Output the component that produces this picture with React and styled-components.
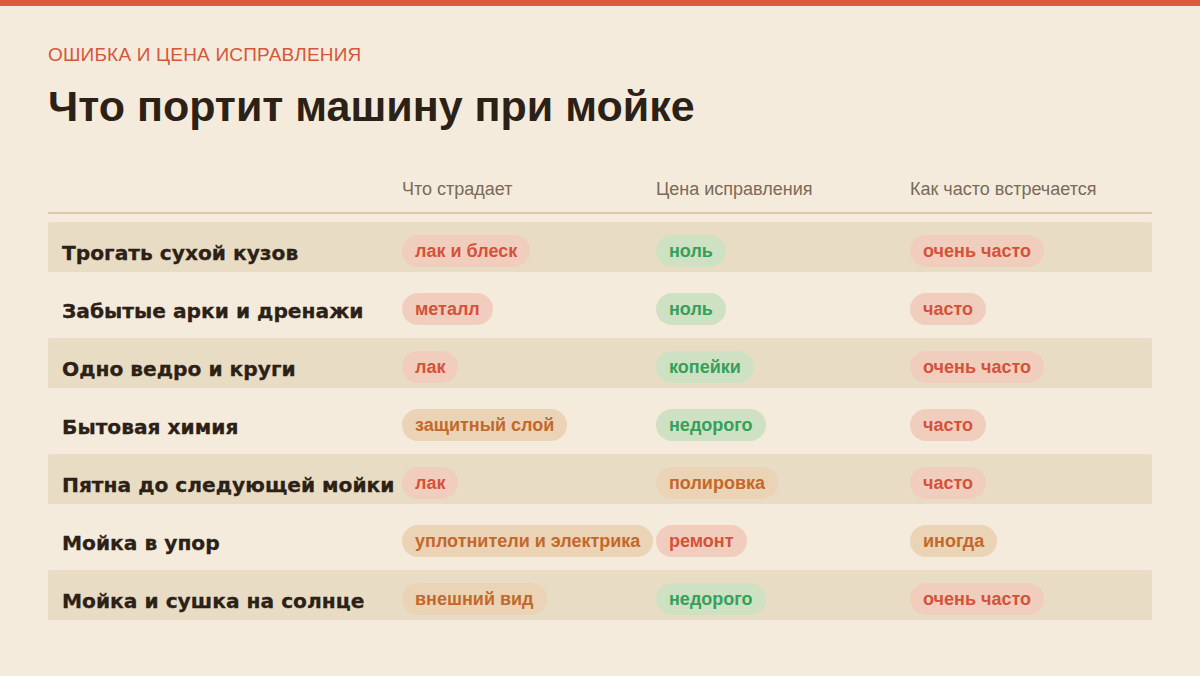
import React from 'react';
import styled, { createGlobalStyle } from 'styled-components';

const GlobalStyle = createGlobalStyle`
	html, body {
		margin: 0;
		padding: 0;
		background: #f5ebdc;
	}
	body {
		font-family: 'Liberation Sans', Arial, sans-serif;
		color: #2b2116;
	}
`;

const Page = styled.div`
	width: 1200px;
	height: 676px;
	box-sizing: border-box;
	border-top: 6px solid #dc5a3c;
	padding: 37px 48px 0;
	overflow: hidden;
`;

const Eyebrow = styled.div`
	font-size: 19px;
	line-height: 24px;
	letter-spacing: 0.2px;
	color: #d4573b;
	text-transform: uppercase;
`;

const Title = styled.h1`
	margin: 14px 0 0;
	font-size: 43px;
	line-height: 50px;
	font-weight: 700;
	color: #2b2116;
`;

const Table = styled.div`
	margin-top: 47px;
	display: grid;
	grid-template-columns: 354px 254px 254px 1fr;
	row-gap: 8px;
`;

const HeadRow = styled.div`
	display: contents;
`;

const HeadCell = styled.div`
	font-size: 18px;
	line-height: 22px;
	color: #7a6a58;
	padding-bottom: 12px;
	border-bottom: 2px solid #d9c7a6;
`;

const Row = styled.div`
	display: grid;
	grid-column: 1 / -1;
	grid-template-columns: subgrid;
	height: 50px;
	box-sizing: border-box;
	padding-top: 13px;
	border-radius: 2px;
	background: ${(p) => (p.$shaded ? '#e9dcc4' : 'transparent')};
`;

const Label = styled.div`
	padding-left: 14px;
	font-family: 'DejaVu Sans', 'Liberation Sans', sans-serif;
	font-size: 20.2px;
	line-height: 36px;
	font-weight: 700;
	-webkit-text-stroke: 0.3px #2b2116;
	color: #2b2116;
	white-space: nowrap;
`;

const Cell = styled.div`
	display: flex;
	align-items: flex-start;
`;

const tones = {
	red: { bg: '#f1cdbd', fg: '#d4523a' },
	green: { bg: '#cfe1c3', fg: '#34a05a' },
	orange: { bg: '#ebd3b6', fg: '#c4682a' },
};

const Pill = styled.span`
	display: inline-flex;
	align-items: center;
	height: 32px;
	padding: 0 13px;
	border-radius: 16px;
	font-size: 18px;
	font-weight: 700;
	white-space: nowrap;
	background: ${(p) => tones[p.$tone].bg};
	color: ${(p) => tones[p.$tone].fg};
`;

const rows = [
	['Трогать сухой кузов', ['лак и блеск', 'red'], ['ноль', 'green'], ['очень часто', 'red']],
	['Забытые арки и дренажи', ['металл', 'red'], ['ноль', 'green'], ['часто', 'red']],
	['Одно ведро и круги', ['лак', 'red'], ['копейки', 'green'], ['очень часто', 'red']],
	['Бытовая химия', ['защитный слой', 'orange'], ['недорого', 'green'], ['часто', 'red']],
	['Пятна до следующей мойки', ['лак', 'red'], ['полировка', 'orange'], ['часто', 'red']],
	['Мойка в упор', ['уплотнители и электрика', 'orange'], ['ремонт', 'red'], ['иногда', 'orange']],
	['Мойка и сушка на солнце', ['внешний вид', 'orange'], ['недорого', 'green'], ['очень часто', 'red']],
];

const App = () => {
	return (
		<>
			<GlobalStyle />
			<Page>
				<Eyebrow>Ошибка и цена исправления</Eyebrow>
				<Title>Что портит машину при мойке</Title>
				<Table>
					<HeadRow>
						<HeadCell />
						<HeadCell>Что страдает</HeadCell>
						<HeadCell>Цена исправления</HeadCell>
						<HeadCell>Как часто встречается</HeadCell>
					</HeadRow>
					{rows.map(([label, ...cells], i) => (
						<Row key={label} $shaded={i % 2 === 0}>
							<Label>{label}</Label>
							{cells.map(([text, tone]) => (
								<Cell key={text + tone}>
									<Pill $tone={tone}>{text}</Pill>
								</Cell>
							))}
						</Row>
					))}
				</Table>
			</Page>
		</>
	);
};

export default App;
